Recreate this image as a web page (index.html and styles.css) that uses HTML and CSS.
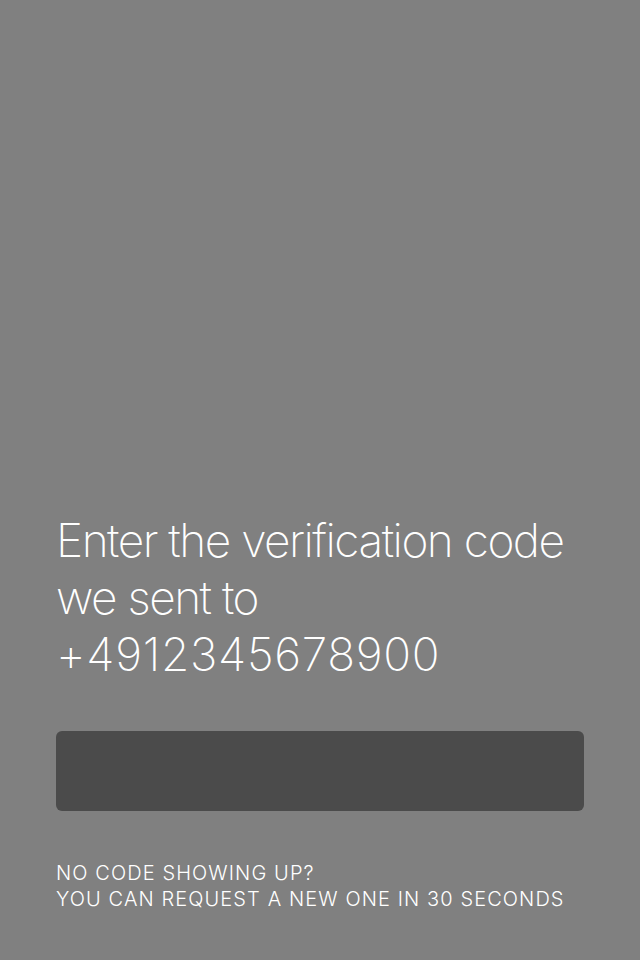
FILE: index.html
```html
<!DOCTYPE html>
<html lang="en">
<head>
<meta charset="utf-8">
<title>Verification</title>
<link rel="stylesheet" href="styles.css">
</head>
<body>
<main class="screen">
  <h1 class="title">Enter the verification code we sent to <span class="phone">+4912345678900</span></h1>
  <div class="code-field"></div>
  <p class="hint">NO CODE SHOWING UP?<br>YOU CAN REQUEST A NEW ONE IN 30 SECONDS</p>
</main>
</body>
</html>
```
FILE: styles.css
```css
html, body {
  margin: 0;
  padding: 0;
  background: #808080;
}
.screen {
  box-sizing: border-box;
  height: 960px;
  display: flex;
  flex-direction: column;
  justify-content: flex-end;
  padding: 0 56px 48px;
  font-family: Inter, "Noto Sans", sans-serif;
  color: #ffffff;
}
.title {
  margin: 0;
  font-size: 46px;
  font-weight: 200;
  line-height: 57px;
  letter-spacing: -1.5px;
}
.phone {
  letter-spacing: 0.7px;
}
.code-field {
  margin-top: 48px;
  height: 80px;
  border-radius: 6px;
  background: #4b4b4b;
}
.hint {
  margin: 49px 0 0;
  font-size: 20px;
  font-weight: 300;
  line-height: 26px;
  letter-spacing: 1.1px;
}
```
